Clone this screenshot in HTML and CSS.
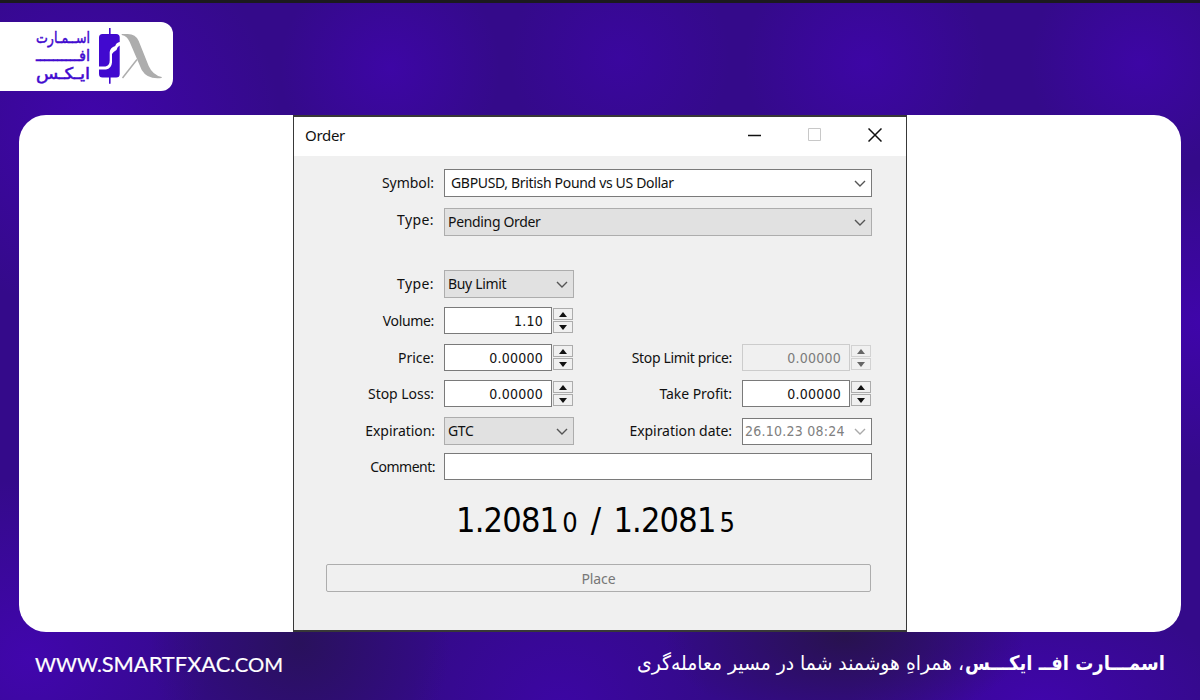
FILE: index.html
```html
<!DOCTYPE html>
<html lang="fa">
<head>
<meta charset="utf-8">
<title>Smart FX</title>
<link rel="stylesheet" href="styles.css">
</head>
<body>
<div class="page">
  <header class="brand">
    <svg class="logo" width="173" height="69" viewBox="0 22 173 69">
      <g class="logo-text" direction="rtl">
        <text x="90" y="43" textLength="54" lengthAdjust="spacingAndGlyphs">اســمـارت</text>
        <text x="90" y="61" textLength="54" lengthAdjust="spacingAndGlyphs">افــــــــــ</text>
        <text x="90" y="79" textLength="54" lengthAdjust="spacingAndGlyphs">ایـکـس</text>
      </g>
      <path class="candle" d="M109 28h1.600v6h5.600q3.500 0 3.500 3.500V42q-3.500.5-4.500 4-5 1.500-5.500 6v8.500q0 5-4.200 6H99V37.500q0-3.500 3.500-3.500h6.500z"/>
      <path class="candle" d="M119.700 45.500V74q0 3.500-3.500 3.500h-5.600v6.300H109v-6.300h-6.500q-3.500 0-3.500-3.500v-4.500h7q5.500-1 6-7V54q1-2 4.500-4 .7-3.500 3.200-4.500z"/>
      <path class="lambda" d="M121.700 34h6q8 0 11 7l10 25q4 9 13 11v1q-14 2-20-8l-12-28q-2.500-6-8-7z"/>
      <path class="leg" d="M137 59.500L122.500 78"/>
    </svg>
  </header>

  <main class="panel">
    <section class="dialog" lang="en">
      <div class="titlebar">
        <span class="title">Order</span>
        <svg class="winbtn" width="14" height="14" viewBox="0 0 14 14"><path d="M0 7.500h13" stroke="#111" stroke-width="1.500"/></svg>
        <svg class="winbtn" width="14" height="14" viewBox="0 0 14 14"><path d="M.5.5h12v12H.5z" fill="none" stroke="#c8c8c8"/></svg>
        <svg class="winbtn" width="14" height="14" viewBox="0 0 14 14"><path d="M.5.5l13 13M13.500.5l-13 13" stroke="#111" stroke-width="1.500"/></svg>
      </div>
      <div class="form">
        <div class="row">
          <label>Symbol:</label>
          <div class="box wide tall pad">GBPUSD, British Pound vs US Dollar<svg class="chev" viewBox="0 0 12 7"><path d="M1 1l5 5 5-5"/></svg></div>
        </div>
        <div class="row type-row">
          <label class="type">Type:</label>
          <div class="box wide tall select">Pending Order<svg class="chev" viewBox="0 0 12 7"><path d="M1 1l5 5 5-5"/></svg></div>
        </div>
        <div class="row gap-lg">
          <label class="type">Type:</label>
          <div class="box tall select">Buy Limit<svg class="chev" viewBox="0 0 12 7"><path d="M1 1l5 5 5-5"/></svg></div>
        </div>
        <div class="row gap-9">
          <label class="tight">Volume:</label>
          <div class="spin"><div class="box num">1.10</div><div class="arrows"><i class="up"></i><i class="down"></i></div></div>
        </div>
        <div class="row gap-10">
          <label>Price:</label>
          <div class="spin"><div class="box num">0.00000</div><div class="arrows"><i class="up"></i><i class="down"></i></div></div>
          <label class="tight">Stop Limit price:</label>
          <div class="spin off"><div class="box num">0.00000</div><div class="arrows"><i class="up"></i><i class="down"></i></div></div>
        </div>
        <div class="row gap-9">
          <label>Stop Loss:</label>
          <div class="spin"><div class="box num">0.00000</div><div class="arrows"><i class="up"></i><i class="down"></i></div></div>
          <label>Take Profit:</label>
          <div class="spin"><div class="box num">0.00000</div><div class="arrows"><i class="up"></i><i class="down"></i></div></div>
        </div>
        <div class="row gap-10">
          <label class="long">Expiration:</label>
          <div class="box tall select">GTC<svg class="chev" viewBox="0 0 12 7"><path d="M1 1l5 5 5-5"/></svg></div>
          <label>Expiration date:</label>
          <div class="box date">26.10.23 08:24<svg class="chev" viewBox="0 0 12 7"><path d="M1 1l5 5 5-5"/></svg></div>
        </div>
        <div class="row gap-8">
          <label class="long comment">Comment:</label>
          <div class="box wide"></div>
        </div>
      </div>
      <div class="quote"><span>1.2081<small>0</small></span><span class="slash">/</span><span>1.2081<small>5</small></span></div>
      <div class="place">Place</div>
    </section>
  </main>

  <footer class="foot">
    <svg width="250" height="36" viewBox="0 0 250 36" class="site">
      <text x="0" y="25" textLength="248" lengthAdjust="spacingAndGlyphs"><tspan class="sm">WWW.</tspan>SMARTFXAC<tspan class="sm">.COM</tspan></text>
    </svg>
    <svg width="532" height="36" viewBox="0 0 532 36" class="tagline">
      <text class="name" direction="rtl" x="531" y="23" textLength="200" lengthAdjust="spacingAndGlyphs">اسمـــارت افــ ایکـــس</text>
      <text direction="rtl" x="330" y="23" textLength="327" lengthAdjust="spacingAndGlyphs">، همراهِ هوشمند شما در مسیر معامله‌گری</text>
    </svg>
  </footer>
</div>
</body>
</html>
```

FILE: styles.css
```css
* { box-sizing: border-box; }
body { margin: 0; }
.page {
  width: 1200px;
  height: 700px;
  display: flex;
  flex-direction: column;
  border-top: 3px solid #1b1a1e;
  overflow: hidden;
  background:
    radial-gradient(circle 150px at 300px 640px, #29115c, #29115c00),
    radial-gradient(ellipse 180px 90px at 845px 635px, #28124f, #28124f00),
    radial-gradient(circle 110px at 390px 65px, #3d06a5, #3d06a500),
    radial-gradient(circle 110px at 620px 55px, #3a079e, #3a079e00),
    radial-gradient(circle 120px at 865px 60px, #3d06a5, #3d06a500),
    radial-gradient(circle 110px at 1140px 60px, #3d06a5, #3d06a500),
    radial-gradient(circle 190px at 90px 120px, #4005aa, #4005aa00),
    radial-gradient(circle 180px at 30px 655px, #4106ad, #4106ad00),
    radial-gradient(circle 150px at 560px 710px, #3c06a4, #3c06a400),
    radial-gradient(ellipse 190px 110px at 1040px 700px, #4005ab, #4005ab00),
    radial-gradient(circle 150px at 1200px 320px, #3f05aa, #3f05aa00),
    #340a8a;
}
.brand {
  margin-top: 19px;
  width: 173px;
  height: 69px;
  background: #fff;
  border-radius: 0 12px 12px 0;
}
.logo { display: block; }
.logo-text { font: 400 16px "DejaVu Sans", sans-serif; fill: #4109cf; stroke: #4109cf; stroke-width: .5; }
.candle { fill: #4109cf; }
.lambda { fill: #adadad; }
.leg { stroke: #adadad; stroke-width: 1.5; }
.panel {
  margin: 24px 19px 0;
  height: 517px;
  background: #fff;
  border-radius: 27px;
  display: flex;
  justify-content: center;
}
.dialog {
  width: 614px;
  height: 517px;
  border: 1px solid #383838;
  border-top-width: 2px;
  border-bottom-width: 2px;
  background: #f0f0f0;
  font: 14px/20px "Noto Sans", sans-serif;
  letter-spacing: -0.33px;
  color: #111;
  display: flex;
  flex-direction: column;
}
.titlebar {
  height: 39px;
  flex: none;
  background: #fff;
  display: flex;
  align-items: center;
  padding: 0 24px 3px 11px;
  gap: 46px;
}
.title { flex: 1; font-size: 15px; letter-spacing: -0.3px; }
.winbtn { display: block; flex: none; }
.form { padding: 13px 0 0; }
.row {
  display: grid;
  grid-template-columns: 150px 130px 168px 130px;
  align-items: center;
}
.type-row { margin-top: 11px; }
.type-row label { padding-bottom: 4px; }
.gap-lg { margin-top: 34px; }
.gap-8 { margin-top: 8px; }
.gap-9 { margin-top: 9px; }
.gap-10 { margin-top: 10px; }
label { text-align: right; padding-right: 10px; white-space: nowrap; letter-spacing: -0.05px; }
label.long { padding-right: 9px; }
label.tight { letter-spacing: -0.35px; }
label.type { letter-spacing: 0.4px; }
label.comment { letter-spacing: -0.5px; }
.box {
  height: 27px;
  background: #fff;
  border: 1px solid #7a7a7a;
  display: flex;
  align-items: center;
  justify-content: space-between;
  padding: 0 5px 0 3px;
  white-space: nowrap;
}
.tall { height: 28px; }
.wide { grid-column: 2 / 5; }
.pad { padding-left: 6px; }
.select { background: #e1e1e1; border-color: #adadad; }
.chev { width: 12px; height: 7px; fill: none; stroke: #555; stroke-width: 1.4; }
.spin { display: flex; gap: 1px; align-items: center; }
.num {
  width: 108px;
  justify-content: flex-end;
  padding-right: 8px;
  font: 14px/20px "DejaVu Sans Condensed", "DejaVu Sans", sans-serif;
  letter-spacing: 0.25px;
}
.arrows { width: 20px; height: 25px; display: flex; flex-direction: column; gap: 1px; }
.arrows i {
  flex: 1;
  border: 1px solid #acacac;
  display: flex;
  align-items: center;
  justify-content: center;
}
.arrows i::before { content: ""; border: 4px solid transparent; }
.arrows .up::before { border-top: 0; border-bottom: 5px solid #111; }
.arrows .down::before { border-bottom: 0; border-top: 5px solid #111; }
.off .box { background: #f0f0f0; border-color: #ccc; color: #7b7b7b; }
.off .arrows i { border-color: #d2d2d2; }
.off .arrows .up::before { border-bottom-color: #666; }
.off .arrows .down::before { border-top-color: #666; }
.date {
  color: #808080;
  padding-left: 2px;
  font: 14px/20px "DejaVu Sans Condensed", "DejaVu Sans", sans-serif;
  letter-spacing: 0.25px;
}
.date .chev { stroke: #aaa; }
.quote {
  margin-top: 16px;
  height: 48px;
  padding-left: 162px;
  display: flex;
  font: 34px/48px "DejaVu Sans Condensed", "DejaVu Sans", sans-serif;
  letter-spacing: -0.8px;
  color: #000;
}
.quote small { font-size: 27px; margin-left: 4px; }
.slash { margin: 0 13px 0 14px; }
.place {
  margin: 20px 35px 0 32px;
  height: 28px;
  border: 1px solid #adadad;
  border-radius: 2px;
  text-align: center;
  line-height: 27px;
  letter-spacing: -0.1px;
  color: #777;
}
.foot {
  height: 36px;
  margin-top: 15px;
  padding: 0 34px 0 35px;
  display: flex;
  justify-content: space-between;
}
.foot svg { overflow: visible; display: block; fill: #fff; }
.site { font: 400 20.5px Lato, sans-serif; stroke: #fff; stroke-width: .2; }
.sm { font-size: 19px; }
.tagline { font: 20px "DejaVu Sans", sans-serif; }
.name { font-weight: 700; }
```
